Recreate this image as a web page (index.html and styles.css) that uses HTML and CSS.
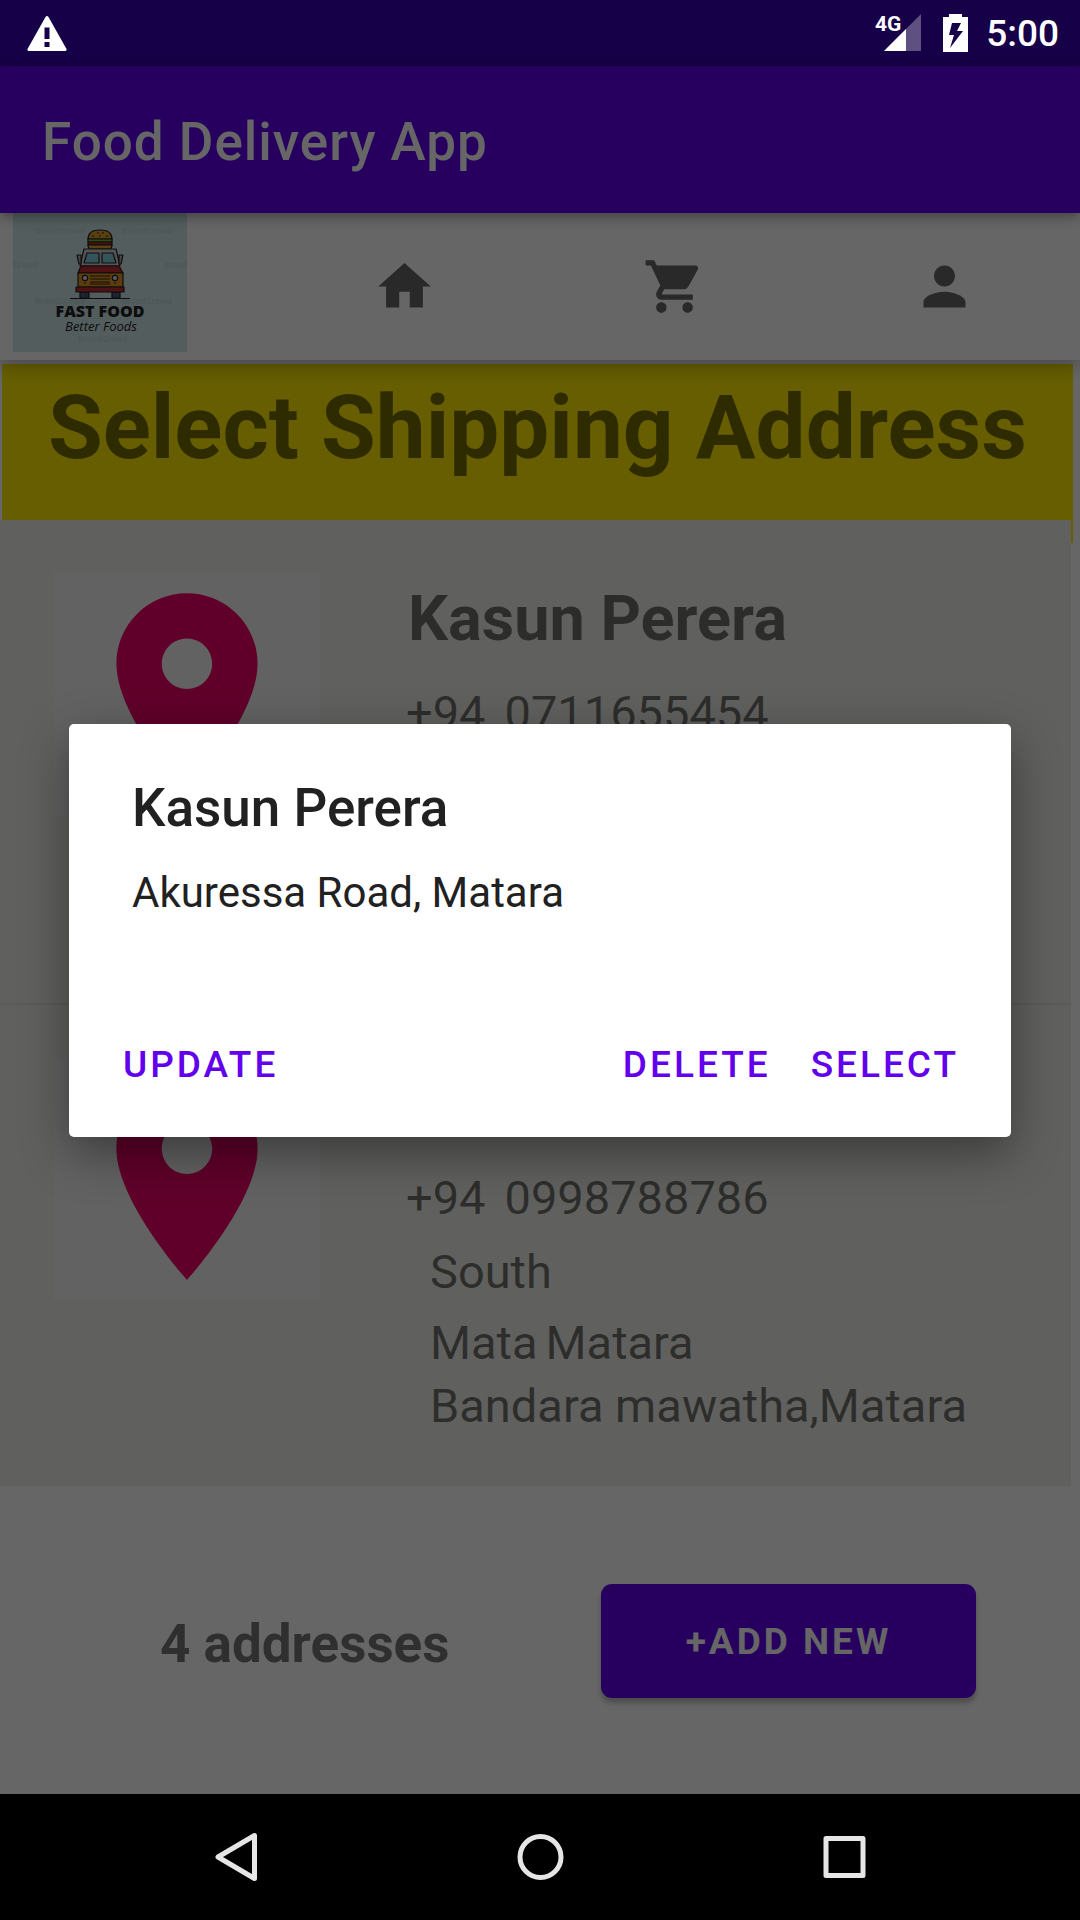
FILE: index.html
```html
<!DOCTYPE html>
<html lang="en">
<head>
<meta charset="utf-8">
<meta name="viewport" content="width=device-width, initial-scale=1">
<title>Food Delivery App</title>
<link rel="stylesheet" href="styles.css">
</head>
<body>
<div class="screen">
  <div class="app">
    <div class="status-bar">
      <div class="status-icons">
        <svg class="warning" viewBox="0 0 40 35" aria-hidden="true"><path fill="#fff" fill-rule="evenodd" d="M18.500 1Q20 -1 21.500 1L39.500 33Q40 35 38 35H2Q0 35 .5 33ZM17.500 11.500V23H22.500V11.500ZM17.500 26V31H22.500V26Z"/></svg>
        <div class="status-right">
          <svg class="signal" viewBox="0 0 46 38" aria-label="4G signal"><path fill="#5e5081" d="M46 0V37H9Z"/><path fill="#fff" d="M31 15V37H9Z"/><text class="signal-text" x="0" y="17">4G</text></svg>
          <svg class="battery" viewBox="0 0 25 38" aria-hidden="true"><path fill="#fff" fill-rule="evenodd" d="M6 0H19V3H25V38H0V3H6ZM9 9L6 21H11L7 34L20 17H14L18 9Z"/></svg>
          <span class="clock">5:00</span>
        </div>
      </div>
    </div>
    <header class="app-bar"><h1 class="app-title">Food Delivery App</h1></header>

    <nav class="tabs">
      <a class="tab tab-logo" href="#" aria-label="Fast Food">
        <svg class="logo" viewBox="0 0 174 139">
          <rect width="174" height="139" fill="#d0e8ea"/>
          <g class="watermark">
            <text x="22" y="21">BrandCrowd</text><text x="109" y="21">BrandCrowd</text>
            <text x="0" y="55">Crowd</text><text x="151" y="55">Brand</text>
            <text x="22" y="91">BrandCrowd</text><text x="109" y="91">BrandCrowd</text>
            <text x="65" y="129">BrandCrowd</text>
          </g>
          <g stroke="#222" stroke-width="1.200" stroke-linejoin="round">
            <path fill="#e8a02c" d="M75 26Q75 17 87 17T99 26Z"/>
            <path fill="#6cc02c" d="M75 26H99V29H75Z"/>
            <path fill="#c42c34" d="M75 29H99V32H75Z"/>
            <path fill="#e8a02c" d="M75 32H99Q99 36 96 36H78Q75 36 75 32Z"/>
            <path fill="#d8cfd0" d="M71 36H103L107 53H67Z"/>
            <path fill="#b9b0b4" d="M64 42H68V51H66ZM106 42H110L108 51H106Z"/>
            <path fill="#86cfe0" d="M74 40H86V50H71ZM89 40H100L103 50H89Z"/>
            <path fill="#c42c34" d="M68 53H106L110 60H65Z"/>
            <path fill="#4c5878" d="M67 79H76V85H67ZM99 79H107V85H99Z"/>
            <path fill="#e8961c" d="M65 60H110V74H65Z"/>
            <path fill="#c42c34" d="M63 74H111V79H63Z"/>
            <circle cx="72" cy="65" r="2.700" fill="#cfe4e6"/><circle cx="102" cy="65" r="2.700" fill="#cfe4e6"/>
            <path fill="none" d="M77 63H97M77 66H97M77 69H97M77 71H97M57 85.500H117M79 23H81M84 20H86M89 20H91M93 23H95M86 23H88M71 70H73M101 70H103"/>
          </g>
          <text class="logo-name" x="87" y="104">FAST FOOD</text>
          <text class="logo-tag" x="88" y="118">Better Foods</text>
        </svg>
      </a>
      <a class="tab" href="#" aria-label="Home"><svg class="tab-icon" viewBox="0 0 24 24"><path d="M10 20v-6h4v6h5v-8h3L12 3 2 12h3v8z"/></svg></a>
      <a class="tab" href="#" aria-label="Cart"><svg class="tab-icon" viewBox="0 0 24 24"><path d="M7 18c-1.100 0-1.990.9-1.990 2S5.900 22 7 22s2-.9 2-2-.9-2-2-2zM1 2v2h2l3.600 7.590-1.350 2.450c-.16.28-.25.61-.25.96 0 1.100.9 2 2 2h12v-2H7.420c-.14 0-.25-.11-.25-.25l.03-.12.9-1.630h7.450c.75 0 1.410-.41 1.750-1.030l3.580-6.490c.08-.14.12-.31.12-.48 0-.55-.45-1-1-1H5.210l-.94-2H1zm16 16c-1.100 0-1.990.9-1.990 2s.89 2 1.990 2 2-.9 2-2-.9-2-2-2z"/></svg></a>
      <a class="tab" href="#" aria-label="Profile"><svg class="tab-icon" viewBox="0 0 24 24"><path d="M12 12c2.210 0 4-1.790 4-4s-1.790-4-4-4-4 1.790-4 4 1.790 4 4 4zm0 2c-2.670 0-8 1.340-8 4v2h16v-2c0-2.660-5.330-4-8-4z"/></svg></a>
    </nav>

    <main class="content">
      <h2 class="page-title">Select Shipping Address</h2>
      <ul class="addresses">
        <li class="address">
          <div class="pin-box"><svg class="pin" viewBox="0 0 24 24"><path d="M12 2C8.130 2 5 5.130 5 9c0 5.250 7 13 7 13s7-7.750 7-13c0-3.870-3.130-7-7-7zm0 9.500c-1.380 0-2.500-1.120-2.500-2.500s1.120-2.500 2.500-2.500 2.500 1.120 2.500 2.500-1.120 2.500-2.500 2.500z"/></svg></div>
          <div class="details">
            <h3 class="name">Kasun Perera</h3>
            <p class="phone"><span>+94</span><span>0711655454</span></p>
            <p class="province">South</p>
            <p class="city"><span>Matara</span><span>Matara</span></p>
            <p class="street">Akuressa Road, Matara</p>
          </div>
        </li>
        <li class="address">
          <div class="pin-box"><svg class="pin" viewBox="0 0 24 24"><path d="M12 2C8.130 2 5 5.130 5 9c0 5.250 7 13 7 13s7-7.750 7-13c0-3.870-3.130-7-7-7zm0 9.500c-1.380 0-2.500-1.120-2.500-2.500s1.120-2.500 2.500-2.500 2.500 1.120 2.500 2.500-1.120 2.500-2.500 2.500z"/></svg></div>
          <div class="details">
            <h3 class="name">Kasun Perera</h3>
            <p class="phone"><span>+94</span><span>0998788786</span></p>
            <p class="province">South</p>
            <p class="city"><span>Mata</span><span>Matara</span></p>
            <p class="street">Bandara mawatha,Matara</p>
          </div>
        </li>
      </ul>
    </main>

    <footer class="summary">
      <p class="count">4 addresses</p>
      <button class="add-button" type="button">+ADD NEW</button>
    </footer>

    <div class="scrim">
      <section class="dialog" role="dialog" aria-modal="true" aria-labelledby="dialog-title">
        <h2 class="dialog-title" id="dialog-title">Kasun Perera</h2>
        <p class="dialog-text">Akuressa Road, Matara</p>
        <div class="dialog-actions">
          <button class="text-button push" type="button">UPDATE</button>
          <button class="text-button" type="button">DELETE</button>
          <button class="text-button" type="button">SELECT</button>
        </div>
      </section>
    </div>
  </div>

  <div class="system-nav">
    <button class="system-button" type="button" aria-label="Back"><svg class="system-icon" viewBox="0 0 56 56"><path d="M46.500 6.500V49.500L10 28Z"/></svg></button>
    <button class="system-button" type="button" aria-label="Home"><svg class="system-icon" viewBox="0 0 56 56"><circle cx="28.500" cy="28" r="20.500"/></svg></button>
    <button class="system-button" type="button" aria-label="Recents"><svg class="system-icon" viewBox="0 0 56 56"><path d="M10 9.500H47V46.500H10Z"/></svg></button>
  </div>
</div>
</body>
</html>
```
FILE: styles.css
```css
* { box-sizing: border-box; }

body {
  margin: 0;
  font-family: Roboto, "Noto Sans", sans-serif;
  color: rgba(0, 0, 0, .54);
  background: #fff;
}

h1, h2, h3, p, ul { margin: 0; padding: 0; }
ul { list-style: none; }
button { font-family: inherit; border: 0; cursor: pointer; }
svg { display: block; }

.screen {
  display: flex;
  flex-direction: column;
  min-height: 100vh;
}

.app {
  position: relative;
  flex: 1;
  display: flex;
  flex-direction: column;
}

/* Status bar: its icons stay above the dimmed layer */
.status-bar { background: #3700b3; }

.status-icons {
  position: relative;
  z-index: 2;
  display: flex;
  align-items: center;
  justify-content: space-between;
  height: 66px;
  padding: 0 21px 0 27px;
}

.warning { width: 40px; height: 35px; }
.status-right { display: flex; align-items: center; }
.signal { width: 46px; height: 38px; margin-right: 22px; overflow: visible; }
.signal-text { font-size: 21px; font-weight: 700; fill: #fff; }
.battery { width: 25px; height: 38px; margin-right: 18px; }
.clock { padding-top: 2px; font-size: 37px; line-height: 44px; font-weight: 500; color: #fff; }

.app-bar {
  position: relative;
  padding: 45px 42px 40px;
  background: #6200ee;
  box-shadow: 0 4px 12px rgba(0, 0, 0, .35);
  z-index: 1;
}

.app-title {
  font-size: 53px;
  line-height: 62px;
  font-weight: 500;
  letter-spacing: 1px;
  color: #fff;
}

.tabs {
  position: relative;
  display: grid;
  grid-template-columns: repeat(4, 1fr);
  background: #fff;
  box-shadow: 0 4px 20px rgba(0, 0, 0, .35);
}

.tab {
  display: flex;
  align-items: center;
  justify-content: center;
  padding-right: 2px;
}

.tab-logo { justify-content: flex-start; padding: 0 0 8px 13px; }
.logo { width: 174px; height: 139px; }
.watermark { font: 700 8px "Open Sans", sans-serif; fill: #c3dadc; }
.logo-name { font: 800 16px "Open Sans", sans-serif; fill: #222; text-anchor: middle; }
.logo-tag { font: italic 400 13px "Open Sans", sans-serif; fill: #222; text-anchor: middle; }
.tab-icon { width: 63px; height: 63px; fill: #666; }

.content { padding-top: 4px; }

.page-title {
  margin: 0 7px 0 2px;
  padding: 12px 0 63px;
  font-size: 89px;
  line-height: 104px;
  font-weight: 700;
  text-align: center;
  background: #ffeb00;
}

/* The list slides up over the lower edge of the title block */
.addresses { margin: -23px 9px 0 0; }

.address {
  display: flex;
  align-items: flex-start;
  gap: 86px;
  padding: 53px 24px 55px 53px;
  background: #f0f0eb;
}

.address + .address { border-top: 2px solid #e0e0dc; padding-bottom: 53px; }

.pin-box {
  display: flex;
  justify-content: center;
  width: 267px;
  background: #f5f5f5;
}

.pin { width: 242px; height: 242px; fill: #f0006a; }

.details {
  flex: 1;
  padding-top: 9px;
  font-size: 47px;
  line-height: 55px;
}

.name {
  margin-bottom: 29px;
  padding-left: 2px;
  font-size: 63px;
  line-height: 74px;
  font-weight: 700;
}

.phone { display: flex; gap: 19px; margin-bottom: 19px; }
.province, .city, .street { padding-left: 24px; }
.province { margin-bottom: 16px; }
.city { display: flex; gap: 8px; margin-bottom: 8px; }

.summary {
  flex: 1;
  display: flex;
  align-items: center;
  justify-content: space-between;
  padding: 50px 104px 48px 160px;
}

.count { padding-top: 6px; font-size: 53px; line-height: 62px; font-weight: 700; }

.add-button {
  min-width: 375px;
  padding: 36px 40px 34px;
  font-size: 37px;
  line-height: 44px;
  font-weight: 700;
  letter-spacing: 3px;
  color: #fff;
  background: #6200ee;
  border-radius: 11px;
  box-shadow: 0 5px 5px rgba(0, 0, 0, .25);
}

.scrim {
  position: absolute;
  inset: 0;
  z-index: 1;
  display: flex;
  align-items: center;
  padding: 66px 69px 0;
  background: rgba(0, 0, 0, .6);
}

.dialog {
  flex: 1;
  padding: 53px 32px 6px 34px;
  color: #212121;
  background: #fff;
  border-radius: 5px;
  box-shadow: 0 16px 48px rgba(0, 0, 0, .4);
}

.dialog-title {
  margin: 0 29px 29px;
  font-size: 53px;
  line-height: 62px;
  font-weight: 500;
}

.dialog-text {
  margin: 0 29px 81px;
  font-size: 42px;
  line-height: 50px;
}

.dialog-actions { display: flex; }

.text-button {
  padding: 44px 20px;
  font-size: 37px;
  line-height: 44px;
  font-weight: 500;
  letter-spacing: 3px;
  color: #6200ee;
  background: none;
}

.push { margin-right: auto; }

.system-nav {
  display: flex;
  justify-content: center;
  gap: 248px;
  padding: 35px 0;
  background: #000;
}

.system-button { padding: 0; background: none; }

.system-icon {
  width: 56px;
  height: 56px;
  fill: none;
  stroke: #e6e6e6;
  stroke-width: 5;
  stroke-linejoin: round;
}
```
